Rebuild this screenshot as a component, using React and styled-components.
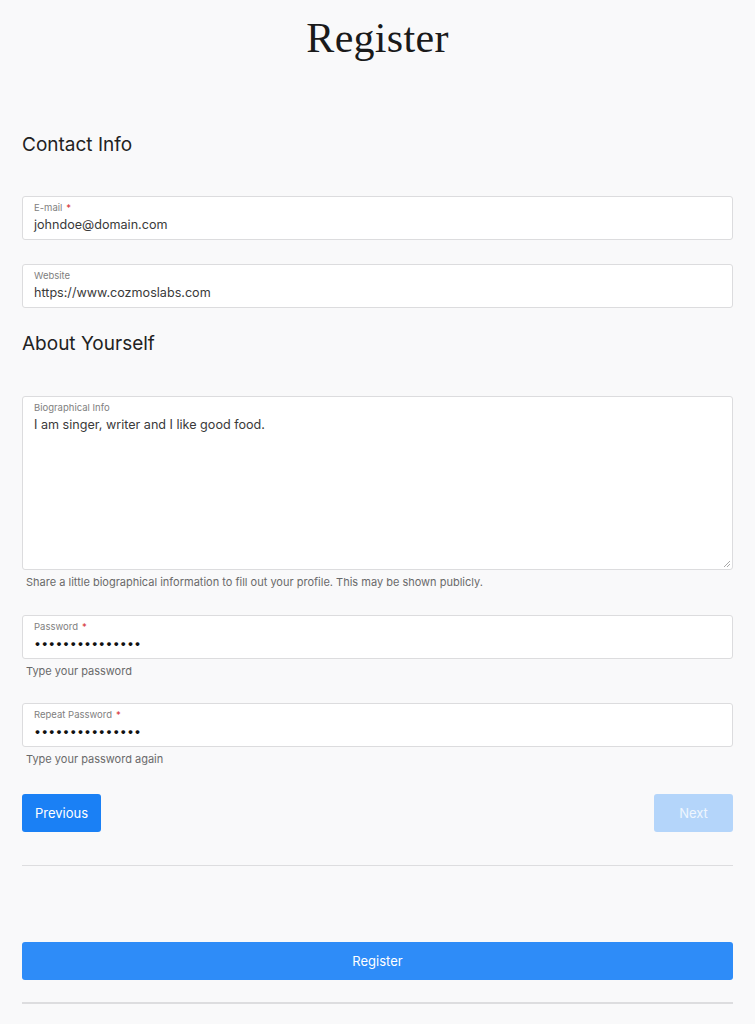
import React from "react";
import styled, { createGlobalStyle } from "styled-components";

const Global = createGlobalStyle`
  html, body { margin: 0; padding: 0; background: #f9f9fa; }
  body { font-family: Inter, "Noto Sans", sans-serif; color: #222; }
  * { box-sizing: border-box; }
`;

const Page = styled.div`
  padding: 0 22px;
  display: flex;
  flex-direction: column;
`;

const Title = styled.h1`
  margin: 12px 0 0;
  height: 52px;
  text-align: center;
  font-family: "Liberation Serif", "DejaVu Serif", serif;
  font-weight: 400;
  font-size: 42px;
  line-height: 52px;
  color: #1a1a1a;
  letter-spacing: 0.3px;
`;

const Heading = styled.h2`
  margin: ${(p) => p.$top}px 0 0;
  font-size: 19px;
  font-weight: 400;
  line-height: 24px;
  color: #222;
`;

const Field = styled.div`
  margin-top: ${(p) => p.$top}px;
  height: ${(p) => p.$h || 44}px;
  background: #fff;
  border: 1px solid #dcdcde;
  border-radius: 3px;
  padding: 5px 11px;
  display: flex;
  flex-direction: column;
  position: relative;
`;

const Label = styled.div`
  font-size: 9.5px;
  line-height: 12px;
  color: #808080;
`;

const Req = styled.span`
  color: #d63638;
  margin-left: 4px;
`;

const Value = styled.div`
  font-size: 12.6px;
  line-height: 20px;
  color: #3a3a3a;
  margin-top: 1px;
`;

const Dots = styled.div`
  font-size: 12.4px;
  line-height: 20px;
  letter-spacing: 0.18px;
  color: #111;
  margin-top: 1px;
`;

const Help = styled.div`
  margin-top: 5px;
  padding-left: 4px;
  font-size: 11px;
  line-height: 14px;
  color: #6a6a6a;
`;

const Grip = styled.svg`
  position: absolute;
  right: 1px;
  bottom: 1px;
`;

const ButtonRow = styled.div`
  margin-top: 28px;
  display: flex;
  justify-content: space-between;
`;

const Btn = styled.button`
  height: 38px;
  width: ${(p) => p.$w || "79px"};
  border: none;
  border-radius: 3px;
  background: ${(p) => p.$bg};
  color: ${(p) => p.$fg || "#fff"};
  font-family: Inter, "Noto Sans", sans-serif;
  font-size: 13px;
  padding: 0;
`;

const Divider = styled.hr`
  margin: ${(p) => p.$top}px 0 0;
  border: none;
  border-top: ${(p) => p.$thick || 1}px solid #dddddf;
`;

export default function App() {
  const dots = "•".repeat(15);
  return (
    <>
      <Global />
      <Page>
        <Title>Register</Title>
        <Heading $top={69}>Contact Info</Heading>
        <Field $top={39}>
          <Label>E-mail<Req>*</Req></Label>
          <Value>johndoe@domain.com</Value>
        </Field>
        <Field $top={24}>
          <Label>Website</Label>
          <Value>https://www.cozmoslabs.com</Value>
        </Field>
        <Heading $top={24}>About Yourself</Heading>
        <Field $top={40} $h={174}>
          <Label>Biographical Info</Label>
          <Value>I am singer, writer and I like good food.</Value>
          <Grip width="8" height="8" viewBox="0 0 8 8">
            <path d="M7 1 L1 7 M7 4 L4 7" stroke="#aaa" strokeWidth="1" fill="none" />
          </Grip>
        </Field>
        <Help>Share a little biographical information to fill out your profile. This may be shown publicly.</Help>
        <Field $top={26}>
          <Label>Password<Req>*</Req></Label>
          <Dots>{dots}</Dots>
        </Field>
        <Help>Type your password</Help>
        <Field $top={25}>
          <Label>Repeat Password<Req>*</Req></Label>
          <Dots>{dots}</Dots>
        </Field>
        <Help>Type your password again</Help>
        <ButtonRow>
          <Btn $bg="#1a80f5">Previous</Btn>
          <Btn $bg="#b4d5fa" $fg="#eef5fe">Next</Btn>
        </ButtonRow>
        <Divider $top={33} />
        <Btn $w="100%" $bg="#2e8cf8" style={{ marginTop: 76 }}>Register</Btn>
        <Divider $top={22} $thick={2} />
      </Page>
    </>
  );
}
